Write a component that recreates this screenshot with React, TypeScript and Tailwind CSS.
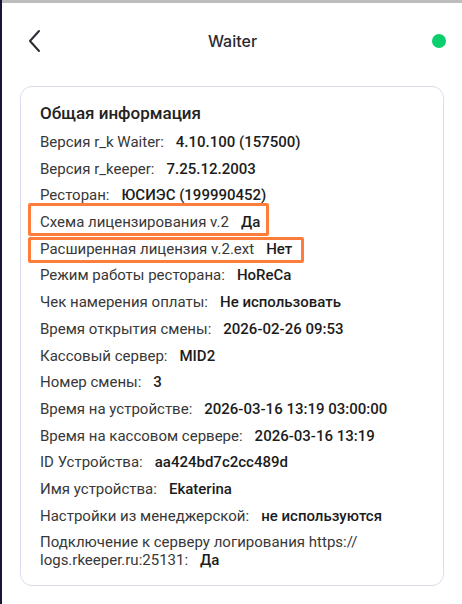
import React from "react";

const rows: { label: string; value: string }[] = [
  { label: "Версия r_k Waiter:", value: "4.10.100 (157500)" },
  { label: "Версия r_keeper:", value: "7.25.12.2003" },
  { label: "Ресторан:", value: "ЮСИЭС (199990452)" },
  { label: "Схема лицензирования v.2", value: "Да" },
  { label: "Расширенная лицензия v.2.ext", value: "Нет" },
  { label: "Режим работы ресторана:", value: "HoReCa" },
  { label: "Чек намерения оплаты:", value: "Не использовать" },
  { label: "Время открытия смены:", value: "2026-02-26 09:53" },
  { label: "Кассовый сервер:", value: "MID2" },
  { label: "Номер смены:", value: "3" },
  { label: "Время на устройстве:", value: "2026-03-16 13:19 03:00:00" },
  { label: "Время на кассовом сервере:", value: "2026-03-16 13:19" },
  { label: "ID Устройства:", value: "aa424bd7c2cc489d" },
  { label: "Имя устройства:", value: "Ekaterina" },
  { label: "Настройки из менеджерской:", value: "не используются" },
];

export default function App() {
  return (
    <div
      className="w-full h-[604px] bg-white flex flex-col border-l-2 border-[#16163a] overflow-hidden"
      style={{ fontFamily: "Roboto, 'Noto Sans', sans-serif" }}
    >
      <div className="h-[3px] bg-[#bdbdbd] shrink-0" />
      <div className="h-[75px] flex items-center justify-between pl-[24px] pr-[16px] shrink-0">
        <svg width="16" height="24" viewBox="0 0 16 24" className="ml-[1px] mt-[1px]">
          <path d="M12 2 L3 12 L12 22" fill="none" stroke="#2b2b33" strokeWidth="2" strokeLinecap="round" strokeLinejoin="round" />
        </svg>
        <div
          className="text-[16px] font-medium text-[#2a2a30] ml-[-10px]"
          style={{ fontFamily: "Inter, 'Noto Sans', sans-serif" }}
        >
          Waiter
        </div>
        <div className="w-[14px] h-[14px] rounded-full bg-[#0acf6c] mt-[1px]" />
      </div>
      <div className="mt-[8px] ml-[18px] w-[424px] relative rounded-[12px] border border-[#dcdcee] pt-[14px] pb-[16px] pl-[19px] pr-[12px]">
        <div className="text-[17px] leading-[24px] font-medium text-[#222]">Общая информация</div>
        <div className="mt-[8px] flex flex-col gap-[8.7px] text-[15px] leading-[18px] text-[#383838]">
          {rows.map((r) => (
            <div key={r.label} className="whitespace-nowrap">
              <span>{r.label}</span>
              <span className="ml-[12px] font-medium text-[#1c1c1c]">{r.value}</span>
            </div>
          ))}
          <div>
            <span>Подключение к серверу логирования https://</span>
            <br />
            <span>logs.rkeeper.ru:25131:</span>
            <span className="ml-[12px] font-medium text-[#1c1c1c]">Да</span>
          </div>
        </div>
        <div className="absolute left-[7px] top-[116px] w-[241px] h-[33px] border-[3px] border-[#ff7d3b] rounded-[2px]" />
        <div className="absolute left-[7px] top-[150px] w-[276px] h-[26px] border-[3px] border-[#ff7d3b] rounded-[2px]" />
      </div>
    </div>
  );
}
